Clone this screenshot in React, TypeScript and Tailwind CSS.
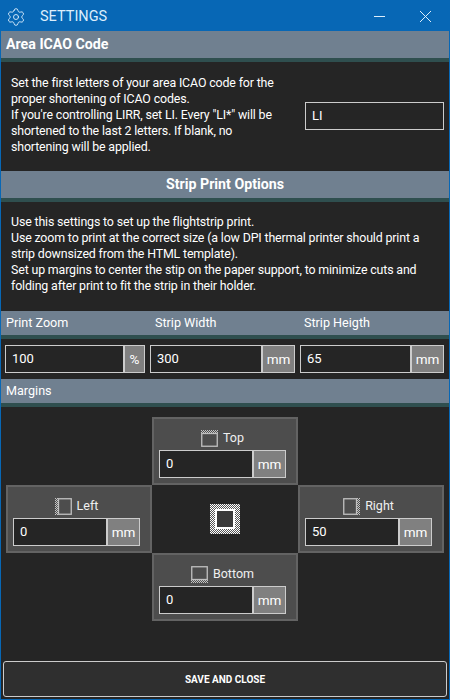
import { Settings } from 'lucide-react';

const font = { fontFamily: 'Roboto, sans-serif' };

function SectionBar({ children, className }: { children: React.ReactNode; className: string }) {
  return (
    <div className={`bg-[#708090] border-b-4 border-[#2f4f4f] text-white flex items-center ${className}`}>
      {children}
    </div>
  );
}

function UnitInput({ value, unit, unitWidth, className }: { value: string; unit: string; unitWidth: string; className: string }) {
  return (
    <div className={`h-[28px] flex border border-[#cccccc] bg-[#252525] ${className}`}>
      <div className="flex-1 pl-[6px] text-[13px] leading-[25px] text-white">{value}</div>
      <div className={`${unitWidth} border-l-2 border-[#cccccc] bg-[#808080] text-white text-[13.5px] leading-[27px] text-center`}>{unit}</div>
    </div>
  );
}

// the small window glyph in the margin cards: a box with one hatched edge
function MarginIcon({ side }: { side: 'top' | 'left' | 'right' | 'bottom' }) {
  const hatch = {
    top: { x: 0, y: 0, width: 17, height: 3 },
    left: { x: 0, y: 0, width: 3, height: 17 },
    right: { x: 14, y: 0, width: 3, height: 17 },
    bottom: { x: 0, y: 14, width: 17, height: 3 },
  }[side];
  const frame = {
    top: { x: 0.75, y: 3.5, width: 15.5, height: 12.75 },
    left: { x: 3.5, y: 0.75, width: 12.75, height: 15.5 },
    right: { x: 0.75, y: 0.75, width: 12.75, height: 15.5 },
    bottom: { x: 0.75, y: 0.75, width: 15.5, height: 12.75 },
  }[side];
  return (
    <svg width="17" height="17" viewBox="0 0 17 17" className="shrink-0">
      <pattern id={`stipple-${side}`} width="2" height="2" patternUnits="userSpaceOnUse">
        <rect width="1" height="1" fill="#c4c4c4" />
        <rect x="1" y="1" width="1" height="1" fill="#c4c4c4" />
      </pattern>
      <rect {...hatch} fill={`url(#stipple-${side})`} />
      <rect {...frame} fill="none" stroke="#c0c0c0" strokeWidth="1.3" />
    </svg>
  );
}

function MarginCard({ label, side, value }: { label: string; side: 'top' | 'left' | 'right' | 'bottom'; value: string }) {
  return (
    <div className="h-[68px] bg-[#4d4d4d] border-2 border-[#636363] pl-[5px] pt-[10px]">
      <div className="w-[127px] h-[17px] pt-px flex items-center justify-center gap-[5px] text-[12.5px] text-[#f0f0f0]">
        <MarginIcon side={side} />
        <span>{label}</span>
      </div>
      <UnitInput value={value} unit="mm" unitWidth="w-[33px]" className="mt-[4px] w-[127px]" />
    </div>
  );
}

function CenterIcon() {
  return (
    <svg width="30" height="30" viewBox="0 0 30 30">
      <defs>
        <pattern id="checker" width="2" height="2" patternUnits="userSpaceOnUse">
          <rect width="1" height="1" fill="#ffffff" />
          <rect x="1" y="1" width="1" height="1" fill="#ffffff" />
          <rect x="1" width="1" height="1" fill="#555555" />
          <rect y="1" width="1" height="1" fill="#555555" />
        </pattern>
      </defs>
      <rect width="30" height="30" fill="url(#checker)" />
      <rect x="5" y="5" width="20" height="20" fill="#ffffff" />
      <rect x="7" y="7" width="16" height="16" fill="#3a3a3a" />
    </svg>
  );
}

export default function App() {
  return (
    <div style={font} className="w-[450px] h-[700px] bg-[#0767b5] flex flex-col overflow-hidden px-px pb-px">
      {/* Title bar */}
      <div className="h-[31px] shrink-0 pt-[2px] flex items-center text-[#dceefc] -mx-px">
        <Settings size={20} strokeWidth={1.1} className="ml-[6px]" />
        <span className="ml-[14px] text-[14.5px]">SETTINGS</span>
        <div className="ml-auto flex items-center">
          <div className="w-[11px] h-px bg-[#dceefc] mr-[35px]" />
          <svg width="11" height="11" viewBox="0 0 11 11" className="mr-[19px]">
            <path d="M0 0L11 11M11 0L0 11" stroke="#dceefc" strokeWidth="1" />
          </svg>
        </div>
      </div>

      <div className="flex-1 bg-[#252525] flex flex-col">
        <SectionBar className="h-[31px] pl-[5px] text-[14.2px] font-bold">Area ICAO Code</SectionBar>

        {/* ICAO section */}
        <div className="h-[109px] flex items-center pl-[10px] pr-[5px]">
          <p className="w-[290px] mb-[4px] text-[12.4px] tracking-[-0.15px] leading-[16px] text-white whitespace-nowrap">
            Set the first letters of your area ICAO code for the<br />
            proper shortening of ICAO codes.<br />
            If you're controlling LIRR, set LI. Every "LI*" will be<br />
            shortened to the last 2 letters. If blank, no<br />
            shortening will be applied.
          </p>
          <div className="ml-auto mb-[2px] w-[139px] h-[28px] border border-[#cccccc] pl-[6px] text-[13px] leading-[25px] text-white">LI</div>
        </div>

        <SectionBar className="h-[31px] justify-center text-[14.2px] font-bold">Strip Print Options</SectionBar>

        {/* Print section */}
        <div className="h-[109px] flex items-center pl-[10px]">
          <p className="mb-[6px] text-[12.4px] tracking-[-0.15px] leading-[16px] text-white whitespace-nowrap">
            Use this settings to set up the flightstrip print.<br />
            Use zoom to print at the correct size (a low DPI thermal printer should print a<br />
            strip downsized from the HTML template).<br />
            Set up margins to center the stip on the paper support, to minimize cuts and<br />
            folding after print to fit the strip in their holder.
          </p>
        </div>

        <SectionBar className="h-[28px] pl-[5px] text-[12.6px] text-[#f0f0f0]">
          <span className="w-[149px]">Print Zoom</span>
          <span className="w-[149px]">Strip Width</span>
          <span>Strip Heigth</span>
        </SectionBar>

        <div className="h-[40px] flex items-center pl-[4px] pr-[5px] gap-[5px]">
          <UnitInput value="100" unit="%" unitWidth="w-[21px]" className="w-[140px]" />
          <UnitInput value="300" unit="mm" unitWidth="w-[33px]" className="w-[145px]" />
          <UnitInput value="65" unit="mm" unitWidth="w-[33px]" className="w-[144px]" />
        </div>

        <SectionBar className="h-[28px] pl-[5px] text-[12.6px] text-[#f0f0f0]">Margins</SectionBar>

        {/* Margins cross */}
        <div className="mt-[10px] grid grid-cols-[146px_146px_146px] justify-center">
          <div />
          <MarginCard label="Top" side="top" value="0" />
          <div />
          <MarginCard label="Left" side="left" value="0" />
          <div className="flex items-center justify-center">
            <CenterIcon />
          </div>
          <MarginCard label="Right" side="right" value="50" />
          <div />
          <MarginCard label="Bottom" side="bottom" value="0" />
          <div />
        </div>

        <div className="mt-auto mx-[2px] mb-[2px] h-[36px] rounded-[3px] border border-[#cccccc] bg-[#2f2f2f] flex items-center justify-center text-[10px] font-bold text-white">
          SAVE AND CLOSE
        </div>
      </div>
    </div>
  );
}
